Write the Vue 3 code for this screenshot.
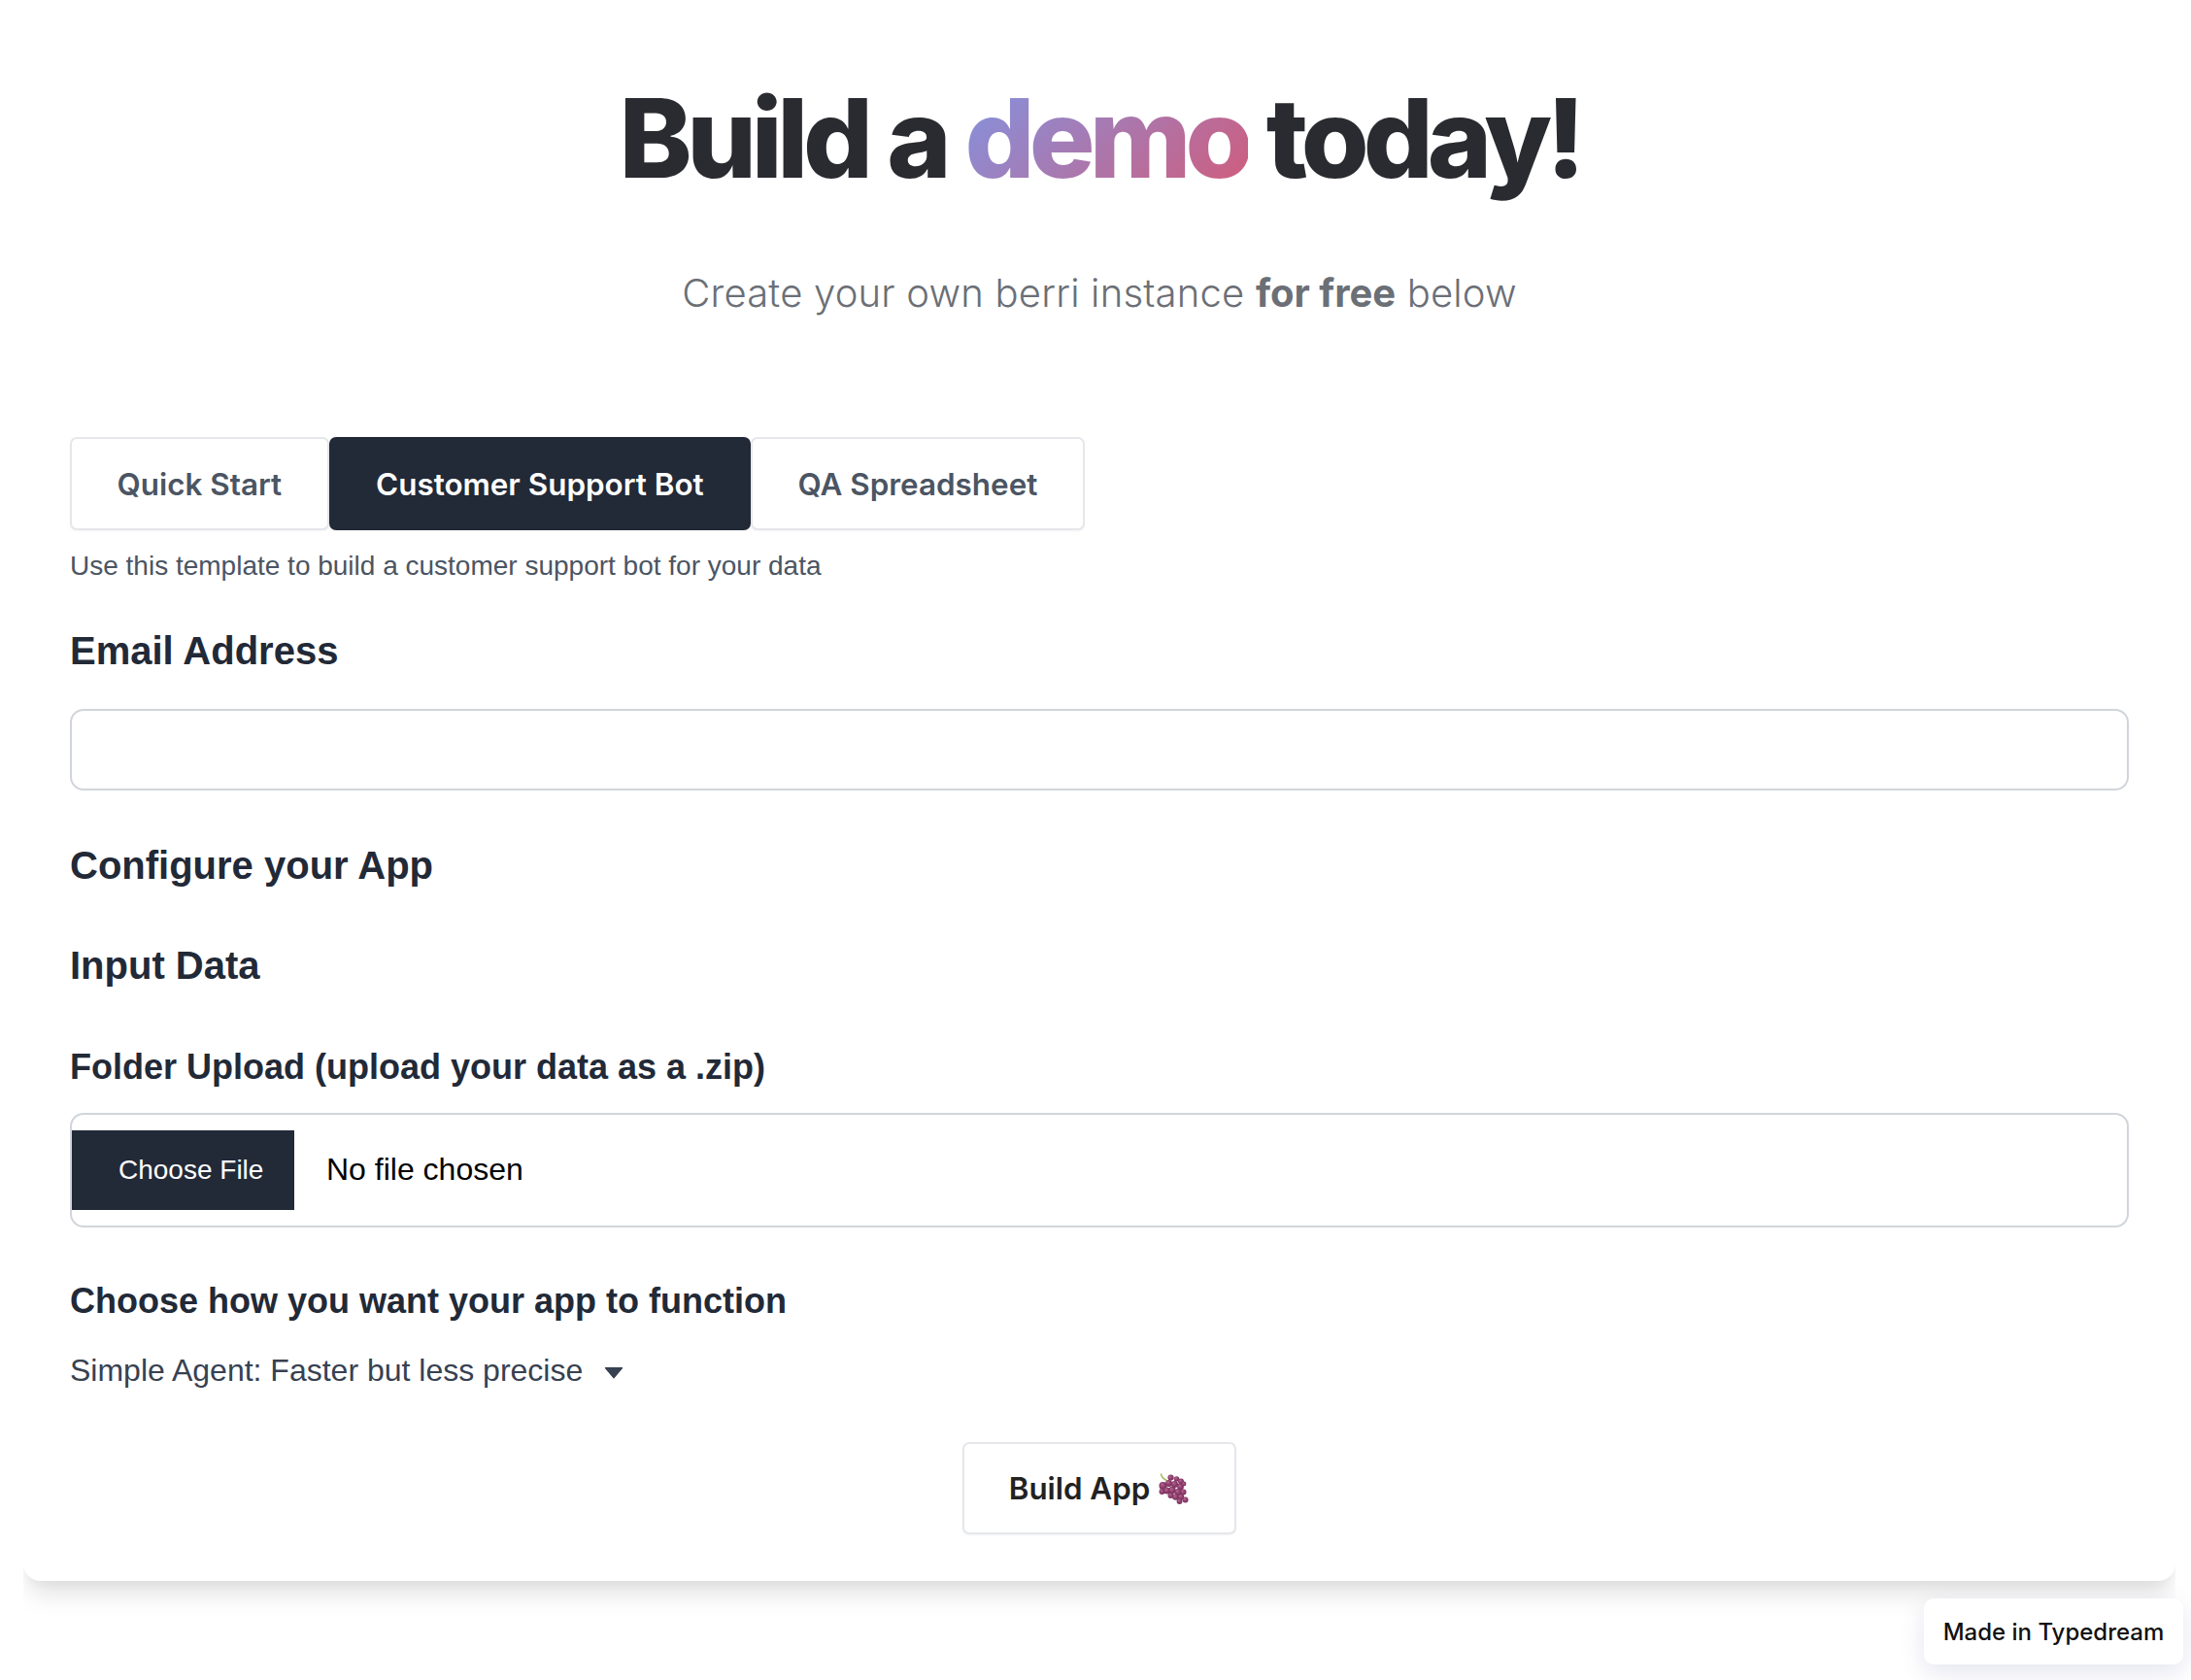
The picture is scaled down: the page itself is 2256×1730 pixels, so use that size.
<script setup>
const tabs = [
  { label: 'Quick Start', active: false },
  { label: 'Customer Support Bot', active: true },
  { label: 'QA Spreadsheet', active: false },
]
const grapes = [
  [12.5, 4.5, 3.1], [18.5, 6, 2.8], [23, 8.5, 3],
  [4.5, 13, 4], [10.5, 10.5, 3.5], [16.5, 11.5, 3.5], [22.5, 14, 3.4], [26, 11, 2.4],
  [3.5, 19, 3], [8.5, 18, 3.6], [14, 17.5, 3.7], [20, 19.5, 3.6], [25.5, 19.5, 3],
  [12.5, 23, 3], [17.5, 24.5, 3.3], [23, 24.5, 3.2], [27.5, 27.5, 3], [21.5, 29, 2.9],
]
</script>

<template>
  <div class="page">
    <main class="card">
      <h1 class="title"><span class="w1">Build a</span> <span class="grad">demo</span> <span class="w3">today!</span></h1>
      <p class="sub">Create your own berri instance <b>for free</b> below</p>

      <div class="tabs">
        <button v-for="t in tabs" :key="t.label" class="tab" :class="{ active: t.active }">{{ t.label }}</button>
      </div>
      <p class="hint">Use this template to build a customer support bot for your data</p>

      <h2 class="h-email">Email Address</h2>
      <div class="input"></div>

      <h2 class="h-config">Configure your App</h2>
      <h2 class="h-data">Input Data</h2>
      <h3 class="h-folder">Folder Upload (upload your data as a .zip)</h3>

      <div class="file">
        <span class="file-btn">Choose File</span>
        <span class="file-name">No file chosen</span>
      </div>

      <h3 class="h-func">Choose how you want your app to function</h3>
      <div class="select">
        <span class="select-text">Simple Agent: Faster but less precise</span>
        <svg class="caret" viewBox="0 0 18 12" width="20" height="13"><path d="M1 1.5h16L9 11z" fill="#374151" stroke="#374151" stroke-linejoin="round" /></svg>
      </div>

      <div class="actions">
        <button class="build">
          <span>Build App</span>
          <svg class="grapes" viewBox="0 0 32 32" width="32" height="32">
            <defs>
              <radialGradient id="grape" cx=".5" cy=".5" r=".6" fx=".35" fy=".3">
                <stop offset="0" stop-color="#b76a93" />
                <stop offset=".55" stop-color="#8f3c6c" />
                <stop offset="1" stop-color="#6a2a52" />
              </radialGradient>
            </defs>
            <path d="M2.5 1c.6 3 3 5.5 7 7" fill="none" stroke="#a5bb62" stroke-width="1.5" stroke-linecap="round" />
            <circle v-for="(g, i) in grapes" :key="i" :cx="g[0]" :cy="g[1]" :r="g[2]" fill="url(#grape)" />
          </svg>
        </button>
      </div>
    </main>
    <a class="badge">Made in Typedream</a>
  </div>
</template>

<style>
html, body { margin: 0; background: #fff; }
</style>

<style scoped>
.page {
  position: relative;
  height: 1730px;
  padding: 0 16px 0 24px;
  overflow: hidden;
  box-sizing: border-box;
}
.card {
  box-sizing: border-box;
  height: 1628px;
  padding: 0 48px;
  background: #fff;
  border-radius: 0 0 18px 18px;
  box-shadow: 0 20px 25px -5px rgba(0, 0, 0, .1), 0 10px 10px -5px rgba(0, 0, 0, .04);
  clip-path: inset(0 0 -80px 0);
  font-family: Inter, sans-serif;
  display: flow-root;
}
h1, h2, h3, p { margin: 0; }
.title {
  margin-top: 74px;
  font-size: 113px;
  line-height: 136px;
  font-weight: 800;
  letter-spacing: -5.6px;
  text-align: center;
  color: #2a2b30;
}
.w1 { letter-spacing: -5.3px; }
.w3 { letter-spacing: -6px; }
.grad {
  letter-spacing: -5.9px;
  background: linear-gradient(135deg, #8095e4 0%, #d35a78 100%);
  -webkit-background-clip: text;
  background-clip: text;
  color: transparent;
}
.sub {
  margin-top: 64px;
  font-size: 40px;
  line-height: 56px;
  font-weight: 300;
  letter-spacing: 0.2px;
  text-align: center;
  color: #6b6f76;
}
.sub b { font-weight: 700; letter-spacing: 0; }
.tabs { display: flex; margin-top: 120px; }
.tab {
  height: 96px;
  padding: 2px 46.5px 0;
  box-sizing: border-box;
  background: #fff;
  border: 2px solid #e5e7eb;
  border-radius: 7px;
  font-family: Inter, sans-serif;
  font-size: 31.4px;
  font-weight: 600;
  color: #4b5563;
  box-shadow: 0 1px 2px rgba(0, 0, 0, .05);
}
.tab.active { background: #222937; border-color: #222937; color: #fff; }
.hint {
  margin-top: 17px;
  font-family: "Liberation Sans", sans-serif;
  font-size: 28px;
  line-height: 40px;
  color: #4b5563;
}
h2, h3 { color: #222937; font-weight: 700; font-family: "Liberation Sans", sans-serif; }
h2 { font-size: 40px; line-height: 52px; }
h3 { font-size: 36px; line-height: 48px; }
.h-email { margin-top: 41px; }
.input {
  margin-top: 34px;
  height: 84px;
  box-sizing: border-box;
  border: 2px solid #d1d5db;
  border-radius: 14px;
}
.h-config { margin-top: 50.5px; }
.h-data { margin-top: 51px; }
.h-folder { margin-top: 55px; }
.file {
  margin-top: 23.5px;
  height: 118px;
  box-sizing: border-box;
  border: 2px solid #d1d5db;
  border-radius: 14px;
  display: flex;
  align-items: center;
}
.file-btn {
  width: 229px;
  height: 82px;
  display: flex;
  align-items: center;
  padding-left: 48px;
  box-sizing: border-box;
  background: #222937;
  color: #fff;
  font-family: "Liberation Sans", sans-serif;
  font-size: 28px;
}
.file-name {
  margin-left: 33px;
  padding-bottom: 2px;
  color: #000;
  font-family: "Liberation Sans", sans-serif;
  font-size: 32px;
}
.h-func { margin-top: 52px; }
.select {
  margin-top: 27px;
  display: flex;
  align-items: center;
  gap: 22px;
  height: 44px;
  font-family: "Liberation Sans", sans-serif;
  font-size: 32px;
  color: #374151;
}
.select-text { padding-bottom: 3px; }
.actions { display: flex; justify-content: center; margin-top: 50px; }
.build {
  width: 282px;
  height: 95px;
  box-sizing: border-box;
  background: #fff;
  border: 2px solid #e5e7eb;
  border-radius: 7px;
  box-shadow: 0 1px 2px rgba(0, 0, 0, .05);
  display: flex;
  align-items: center;
  justify-content: center;
  gap: 9px;
  font-family: Inter, sans-serif;
  font-size: 31.3px;
  font-weight: 600;
  color: #222;
}
.badge {
  position: absolute;
  left: 1981px;
  top: 1646px;
  width: 267px;
  height: 68px;
  display: flex;
  align-items: center;
  justify-content: center;
  background: #fff;
  border-radius: 10px;
  box-shadow: 0 8px 24px rgba(90, 90, 160, .16);
  font-family: Inter, sans-serif;
  font-size: 24px;
  font-weight: 500;
  color: #111;
}
</style>
